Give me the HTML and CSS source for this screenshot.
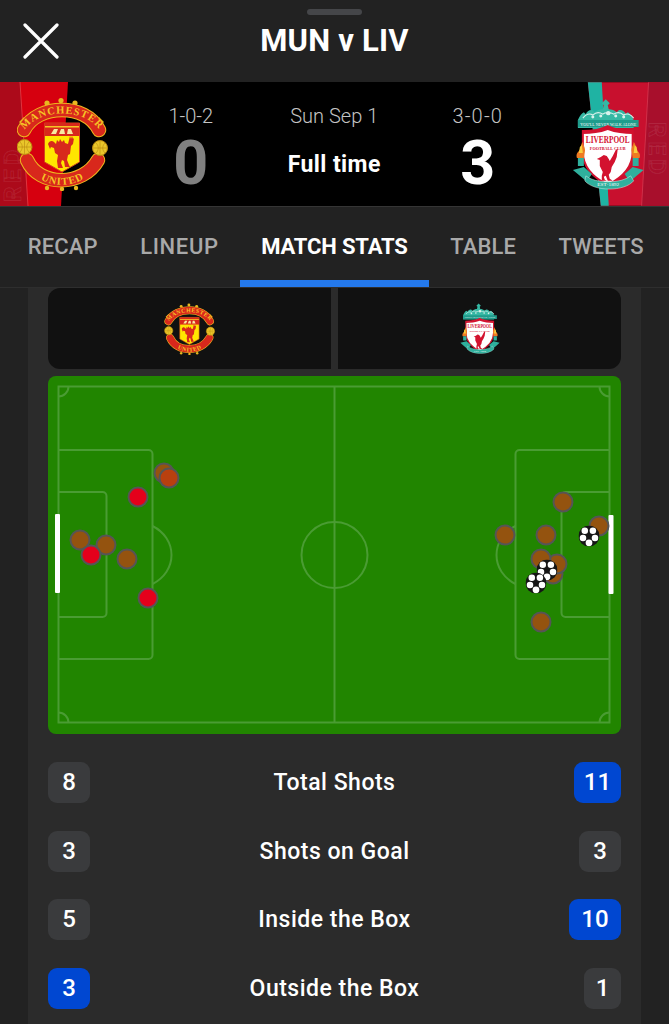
FILE: index.html
```html
<!DOCTYPE html>
<html lang="en">
<head>
<meta charset="utf-8">
<title>MUN v LIV</title>
<link rel="stylesheet" href="styles.css">
</head>
<body>
<svg class="defs" width="0" height="0" aria-hidden="true">
  <defs>
    <symbol id="crest-mu" viewBox="0 0 92 94">
      <g fill="#e8b820">
        <circle cx="30" cy="6" r="2.6"/><circle cx="44" cy="3.500" r="2.6"/><circle cx="58" cy="6" r="2.6"/>
        <path d="M2 25l5-5 3 5-4 4zM87 25l-5-5-3 5 4 4z"/>
        <circle cx="30" cy="91" r="2.2"/><circle cx="45" cy="92" r="2.2"/><circle cx="59" cy="91" r="2.2"/>
      </g>
      <path d="M7 33C14 19 30 13 45 13s30 6 37 20" fill="none" stroke="#efb61e" stroke-width="14.500" stroke-linecap="round"/>
      <path d="M7 33C14 19 30 13 45 13s30 6 37 20" fill="none" stroke="#d8281c" stroke-width="12.500" stroke-linecap="round"/>
      <path d="M10 63C22 90 66 90 81 63" fill="none" stroke="#efb61e" stroke-width="14.500" stroke-linecap="round"/>
      <path d="M10 63C22 90 66 90 81 63" fill="none" stroke="#d8281c" stroke-width="12.500" stroke-linecap="round"/>
      <path id="mu-top-t" d="M5 37C13 22 30 16.500 45 16.500s32 5.500 40 20.500" fill="none"/>
      <path id="mu-bot-t" d="M11 70C26 94 64 94 80 69" fill="none"/>
      <text class="mu-text"><textPath href="#mu-top-t" startOffset="50%" text-anchor="middle">MANCHESTER</textPath></text>
      <text class="mu-text"><textPath href="#mu-bot-t" startOffset="50%" text-anchor="middle">UNITED</textPath></text>
      <circle cx="7.5" cy="50" r="7.5" fill="#e9c62a" stroke="#b8860f" stroke-width="1"/>
      <path d="M1 50h13M7.500 43v14M3 45c3 3 3 7 0 10M12 45c-3 3-3 7 0 10" fill="none" stroke="#b8860f" stroke-width=".6"/>
      <circle cx="83" cy="51" r="7.5" fill="#e9c62a" stroke="#b8860f" stroke-width="1"/>
      <path d="M76 51h14M83 44v14M79 46c3 3 3 7 0 10M88 46c-3 3-3 7 0 10" fill="none" stroke="#b8860f" stroke-width=".6"/>
      <path d="M27.500 26h35v39L45 75 27.500 65z" fill="#ffe600" stroke="#d2491a" stroke-width="1"/>
      <path d="M27.500 26h35v13h-35z" fill="#d8281c"/>
      <path d="M28 29h34v1.500H28z" fill="#f6c324"/>
      <path d="M34 37l3-5h4l-2 5zM42 37l2-5h3l1 5zM50 37l1-5h3l2 5z" fill="#f8e8a0"/>
      <path d="M31 47c1-3 4-4 6-2l2 2 1-4 2 2 1-3 2 3 2-2 1 3 3 1 1-4 1-4 1 3 1-3 1 3 1-1-1 6-2 2-1 8-2 1-1 5 2 5 1 2h-5l-1-6-2-1-1 3 2 5h-5l-1-7 1-6-3-2-1-5-3-1-1 2z" fill="#d8281c"/>
    </symbol>
    <symbol id="crest-lfc" viewBox="0 0 71 94">
      <path d="M5 22c2-5 4-7 6-8l2 2c1-3 4-5 7-4l2 2c2-2 5-3 8-3l1-4-2-2 4-4 4 4-2 2 1 4c3 0 6 1 8 3l2-2c3-1 6 1 7 4l2-2c2 1 4 3 6 8v8H5z" fill="#35b8a4"/>
      <path d="M10 20c3-4 7-5 10-3 3-3 7-3 10-1 2-2 8-2 11 0 3-2 7-2 10 1 3-2 7-1 10 3" stroke="#d8f2ec" stroke-width="1.200" fill="none"/>
      <circle cx="20" cy="19" r="1.500" fill="#d8f2ec"/><circle cx="28" cy="18" r="1.500" fill="#d8f2ec"/><circle cx="35.500" cy="15" r="2.200" fill="#d8f2ec"/><circle cx="43" cy="18" r="1.500" fill="#d8f2ec"/><circle cx="51" cy="19" r="1.500" fill="#d8f2ec"/>
      <path d="M5 22h61v7H5z" fill="#1f9c8c"/>
      <text class="lfc-motto" x="35.500" y="27.500" textLength="56" lengthAdjust="spacingAndGlyphs">YOU'LL NEVER WALK ALONE</text>
      <path d="M10 33c9 0 17-1 25-5 8 4 16 5 25 5v21c0 17-13 27-25 33-12-6-25-16-25-33z" fill="#fff" stroke="#d3122f" stroke-width="2"/>
      <path d="M10 33c9 0 17-1 25-5 8 4 16 5 25 5v3c-9 0-17-1-25-4-8 3-16 4-25 4z" fill="#d3122f"/>
      <text class="lfc-name" x="35" y="45.500" textLength="44" lengthAdjust="spacingAndGlyphs">LIVERPOOL</text>
      <text class="lfc-club" x="35" y="52" textLength="36" lengthAdjust="spacingAndGlyphs">FOOTBALL CLUB</text>
      <path d="M28 59l3-2 3 1 2 3 1 2 3-5 3-6 2-1-1 8-2 5-3 5-1 5-2 3 1 4 3 2h-5l-2-5-2 1 1 3 2 1h-5l0-5 1-4-3-6v-6l-3-1z" fill="#d3122f"/>
      <path d="M6 53c3-3 1-6 4-9 0 3 3 6 2 10l-1 6H4c-1-3 0-5 2-7zM65 53c-3-3-1-6-4-9 0 3-3 6-2 10l1 6h7c1-3 0-5-2-7z" fill="#ee7a22"/>
      <path d="M7 49l2-2 1 8H6zM64 49l-2-2-1 8h4z" fill="#f8cf40"/>
      <path d="M5 60h6v8H5zM60 60h6v8h-6z" fill="#2fb09d"/>
      <path d="M0 72l11-3 8 7-5 8-7-6zM71 72l-11-3-8 7 5 8 7-6z" fill="#2fb09d"/>
      <path d="M13 78c9 8 36 8 45 0l3 5c-9 11-40 11-49 0z" fill="#2fb09d" stroke="#d8f2ec" stroke-width=".5"/>
      <text class="lfc-est" x="35.500" y="88.500" textLength="22" lengthAdjust="spacingAndGlyphs">EST·1892</text>
    </symbol>
    <symbol id="ball" viewBox="-10 -10 20 20">
      <circle r="10" fill="#161616"/>
      <g fill="#fff">
        <circle cx="-4" cy="-5" r="3.100"/><circle cx="3.700" cy="-5" r="3.100"/>
        <circle cx="-5.700" cy="2" r="3.100"/><circle cx="5.700" cy="2" r="3.100"/>
        <circle cy="6.500" r="3.200"/>
      </g>
    </symbol>
  </defs>
</svg>

<div class="app">
  <header class="topbar">
    <span class="grabber"></span>
    <svg class="close" viewBox="0 0 36 36" aria-label="Close"><path d="M2 2l32 32M34 2L2 34"/></svg>
    <h1 class="title">MUN v LIV</h1>
  </header>

  <section class="scoreband">
    <svg class="side" viewBox="0 0 119 124">
      <path d="M0 0h68l-7 124H0z" fill="#d6000f"/>
      <path d="M0 0h20l8 124H0z" fill="#ac0a1a"/>
      <path d="M20 0l8 124" stroke="#ec4a52" stroke-width="1" opacity=".7"/>
      <text class="redmark" x="0" y="0" transform="translate(21 120) rotate(-90)">RED</text>
      <use href="#crest-mu" x="17" y="15" width="92" height="94"/>
    </svg>
    <div class="teamscore">
      <span class="record">1-0-2</span>
      <span class="goals goals-loss">0</span>
    </div>
    <div class="status">
      <span class="record">Sun Sep 1</span>
      <span class="state">Full time</span>
    </div>
    <div class="teamscore">
      <span class="record record-wide">3-0-0</span>
      <span class="goals">3</span>
    </div>
    <svg class="side" viewBox="549 0 120 124">
      <path d="M587 0h82v124h-69z" fill="#c8102e"/>
      <path d="M587 0h14l7 124h-8z" fill="#1fb3a3"/>
      <path d="M648 0h21v124h-28z" fill="#a80f2c"/>
      <path d="M648 0l-7 124" stroke="#e0485e" stroke-width="1" opacity=".6"/>
      <text class="redmark" x="0" y="0" transform="translate(648 40) rotate(90)">RED</text>
      <use href="#crest-lfc" x="572" y="16" width="71" height="94"/>
    </svg>
  </section>

  <nav class="tabs">
    <a class="tab">RECAP</a>
    <a class="tab tab-wide">LINEUP</a>
    <a class="tab tab-active">MATCH STATS</a>
    <a class="tab">TABLE</a>
    <a class="tab">TWEETS</a>
  </nav>

  <main class="content">
    <div class="teams">
      <div class="team team-home"><svg class="team-crest"><use href="#crest-mu" width="52" height="52"/></svg></div>
      <div class="team team-away"><svg class="team-crest"><use href="#crest-lfc" width="52" height="52"/></svg></div>
    </div>

    <svg class="pitch" viewBox="48 376 573 358">
      <g class="lines">
        <rect x="58.500" y="386.500" width="551" height="336"/>
        <path d="M334.500 386.500v336"/>
        <circle cx="334.500" cy="555" r="33"/>
        <path d="M58.500 450h90a4 4 0 0 1 4 4v201a4 4 0 0 1-4 4h-90"/>
        <path d="M58.500 492h44a4 4 0 0 1 4 4v117a4 4 0 0 1-4 4h-44"/>
        <path d="M152.500 526c12 6 19 17 19 29s-7 23-19 29"/>
        <path d="M609.500 450h-90a4 4 0 0 0-4 4v201a4 4 0 0 0 4 4h90"/>
        <path d="M609.500 492h-44a4 4 0 0 0-4 4v117a4 4 0 0 0 4 4h44"/>
        <path d="M515.500 526c-12 6-19 17-19 29s7 23 19 29"/>
        <path d="M58.500 396.500a10 10 0 0 0 10-10M599.500 386.500a10 10 0 0 0 10 10M58.500 712.500a10 10 0 0 1 10 10M599.500 722.500a10 10 0 0 1 10-10"/>
      </g>
      <rect class="goal" x="55" y="514" width="5" height="79" rx="1"/>
      <rect class="goal" x="608.500" y="515" width="5" height="79" rx="1"/>
      <g class="shot shot-off">
        <circle cx="164" cy="473" r="9.500"/><circle cx="80" cy="540" r="9.500"/>
        <circle cx="106" cy="545" r="9.500"/><circle cx="127" cy="559" r="9.500"/>
      </g>
      <circle class="shot-blend" cx="169" cy="478" r="9.500"/>
      <g class="shot shot-on">
        <circle cx="138" cy="497" r="9.500"/><circle cx="91" cy="555" r="9.500"/><circle cx="148" cy="598" r="9.500"/>
      </g>
      <g class="shot shot-off">
        <circle cx="563" cy="502" r="9.500"/><circle cx="599" cy="526" r="9.500"/>
        <circle cx="505" cy="535" r="9.500"/><circle cx="546" cy="535" r="9.500"/>
        <circle cx="553" cy="574" r="9.500"/><circle cx="557" cy="564" r="9.500"/>
        <circle cx="541" cy="559" r="9.500"/><circle cx="541" cy="622" r="9.500"/>
      </g>
      <use href="#ball" x="578.500" y="525.500" width="21" height="21"/>
      <use href="#ball" x="536.500" y="559.500" width="21" height="21"/>
      <use href="#ball" x="525.500" y="572.500" width="21" height="21"/>
    </svg>

    <ul class="stats">
      <li class="stat"><span class="pill pill-home">8</span><span class="label">Total Shots</span><span class="pill pill-lead pill-w47">11</span></li>
      <li class="stat"><span class="pill pill-home">3</span><span class="label">Shots on Goal</span><span class="pill">3</span></li>
      <li class="stat"><span class="pill pill-home">5</span><span class="label">Inside the Box</span><span class="pill pill-lead pill-w52">10</span></li>
      <li class="stat"><span class="pill pill-home pill-lead">3</span><span class="label">Outside the Box</span><span class="pill pill-w37">1</span></li>
    </ul>
  </main>
</div>
</body>
</html>
```
FILE: styles.css
```css
* { box-sizing: border-box; }

html, body {
  margin: 0;
  padding: 0;
  background: #222222;
}

body {
  width: 669px;
  height: 1024px;
  overflow: hidden;
  font-family: Roboto, "Liberation Sans", sans-serif;
  color: #fff;
}

.defs { display: block; width: 0; height: 0; }

.app { display: flex; flex-direction: column; height: 1024px; }

/* top bar */
.topbar {
  position: relative;
  height: 82px;
  flex: none;
  display: flex;
  align-items: center;
  justify-content: center;
  background: #222222;
}

.grabber {
  position: absolute;
  top: 9px;
  left: 307px;
  width: 55px;
  height: 6px;
  border-radius: 3px;
  background: #454649;
}

.close {
  position: absolute;
  left: 23px;
  top: 23px;
  width: 36px;
  height: 36px;
  fill: none;
  stroke: #fff;
  stroke-width: 3.2;
  stroke-linecap: round;
}

.title {
  margin: 0 0 2px;
  font-size: 31px;
  font-weight: 700;
  line-height: 1;
  letter-spacing: 0.2px;
}

/* score band */
.scoreband {
  height: 125px;
  flex: none;
  display: grid;
  grid-template-columns: 119px 143.5px 143.5px 143.5px 119.5px;
  background: #000;
  border-bottom: 1px solid #353535;
}

.side { display: block; width: 100%; height: 124px; overflow: hidden; }

.redmark {
  font-family: Roboto, sans-serif;
  font-size: 24px;
  font-weight: 700;
  letter-spacing: 4px;
  fill: none;
  stroke: #fff;
  stroke-opacity: 0.09;
  stroke-width: 1;
}

.teamscore, .status {
  display: flex;
  flex-direction: column;
  align-items: center;
  height: 124px;
}

.record {
  margin-top: 23px;
  font-size: 20px;
  line-height: 22px;
  font-weight: 300;
  color: #c4c4c4;
}

.record-wide { letter-spacing: 1.2px; }

.goals {
  margin-top: 1px;
  font-size: 61px;
  line-height: 70px;
  font-weight: 700;
  color: #fff;
}

.goals-loss { color: #808080; }

.state {
  margin-top: 25px;
  font-size: 23px;
  line-height: 26px;
  font-weight: 700;
  letter-spacing: 0.4px;
  color: #fff;
}

/* tabs */
.tabs {
  height: 81px;
  flex: none;
  display: flex;
  padding-left: 6.5px;
  background: #222222;
  border-bottom: 1px solid #2e2e2e;
}

.tab {
  display: flex;
  align-items: center;
  padding: 0 21.3px 2px;
  font-size: 22px;
  font-weight: 500;
  letter-spacing: 0.1px;
  color: #a9a9a9;
  white-space: nowrap;
}

.tab-wide { letter-spacing: 0.65px; }

.tab-active {
  color: #fff;
  font-weight: 700;
  letter-spacing: -0.15px;
  box-shadow: inset 0 -7px 0 #2479ec;
}

/* content */
.content {
  flex: 1;
  margin: 0 28px;
  padding: 0 20px;
  background: #2b2b2b;
  min-height: 0;
}

.teams {
  display: grid;
  grid-template-columns: 283px 283px;
  column-gap: 7px;
}

.team {
  height: 81px;
  background: #111;
  display: flex;
  align-items: center;
  justify-content: center;
}

.team-home { border-radius: 12px 0 0 12px; }
.team-away { border-radius: 0 12px 12px 0; }

.team-crest { width: 52px; height: 52px; display: block; }

.pitch {
  display: block;
  width: 573px;
  height: 358px;
  margin-top: 7px;
  border-radius: 8px;
  background: #218500;
}

.lines { fill: none; stroke: #4a9c33; stroke-width: 2; }

.goal { fill: #fff; }

.shot circle, .shot-blend { stroke: #555; stroke-width: 2; }
.shot-off circle { fill: #94530f; }
.shot-on circle { fill: #e4001b; }
.shot-blend { fill: #b8400f; }

/* stats */
.stats {
  list-style: none;
  margin: 28px 0 0;
  padding: 0;
  display: flex;
  flex-direction: column;
  gap: 27.5px;
}

.stat {
  height: 41px;
  display: grid;
  grid-template-columns: 1fr auto 1fr;
  align-items: center;
}

.label {
  font-size: 23px;
  font-weight: 500;
  letter-spacing: 0.5px;
  text-align: center;
}

.pill {
  justify-self: end;
  width: 42px;
  height: 41px;
  border-radius: 9px;
  background: #3a3b3d;
  font-size: 24px;
  font-weight: 500;
  line-height: 40px;
  text-align: center;
}

.pill-home { justify-self: start; }
.pill-lead { background: #0047d1; }
.pill-w37 { width: 37px; }
.pill-w47 { width: 47px; }
.pill-w52 { width: 52px; }

/* crest text */
.mu-text {
  font-family: "Liberation Serif", serif;
  font-size: 10.5px;
  font-weight: 700;
  letter-spacing: 0.9px;
  fill: #f6c324;
}

.lfc-motto, .lfc-name, .lfc-club, .lfc-est {
  text-anchor: middle;
  font-family: "Liberation Serif", serif;
}

.lfc-motto { font-size: 5px; fill: #fff; }
.lfc-name { font-size: 10px; fill: #d3122f; font-weight: 700; }
.lfc-club { font-size: 5px; fill: #d3122f; font-weight: 700; }
.lfc-est { font-size: 5px; fill: #fff; }
```
